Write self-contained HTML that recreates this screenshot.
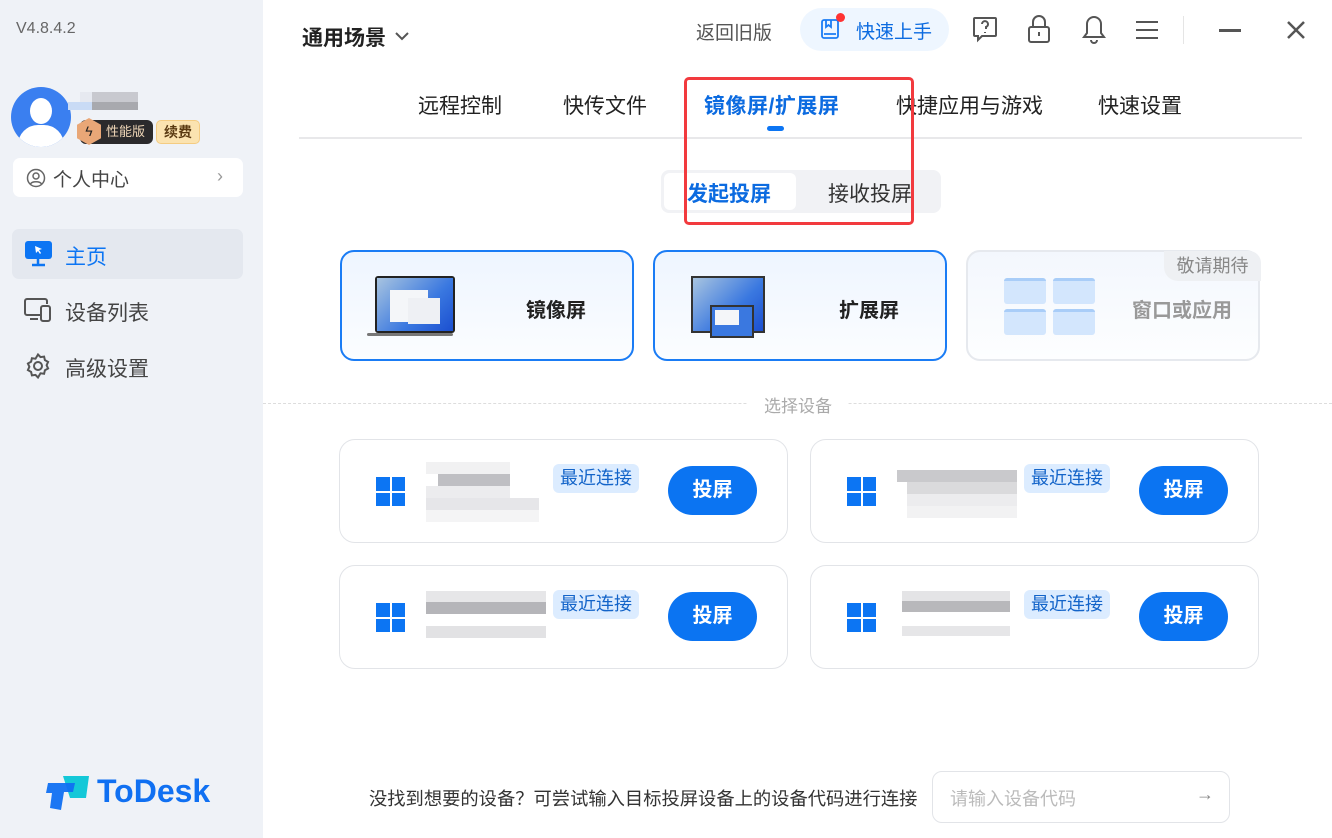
<!DOCTYPE html>
<html><head><meta charset="utf-8"><style>
*{margin:0;padding:0;box-sizing:border-box}
body{width:1332px;height:838px;overflow:hidden;background:#fff;font-family:"Liberation Sans","Noto Sans CJK SC",sans-serif;position:relative;color:#222}
.a{position:absolute}
#side{left:0;top:0;width:263px;height:838px;background:#eff2f7}
.t{white-space:nowrap}
.mode{border:2px solid #1a7cf5;border-radius:14px;background:linear-gradient(#eef5ff,#fbfdff);width:294px;height:111px;top:250px}
.mode b{position:absolute;top:42px;font-size:20px;color:#222}
.card{border:1.5px solid #e2e4e8;border-radius:16px;width:449px;height:104px;background:#fff}
.win{left:36px;top:37px;width:29px;height:29px}
.win i{position:absolute;width:13.5px;height:13.5px;background:#0c75f3}
.tag{left:213px;top:24px;width:86px;height:29px;background:#dcecff;border-radius:6px;color:#1364c9;font-size:18px;text-align:center;line-height:29px}
.btn{left:328px;top:26px;width:89px;height:49px;background:#0b74f2;border-radius:25px;color:#fff;font-size:20px;font-weight:bold;text-align:center;line-height:49px}
.px{position:absolute}
.tab{font-size:21px;top:90px}
</style></head><body>
<div id="side" class="a">
 <div class="a t" style="left:16px;top:20px;font-size:16px;color:#666">V4.8.4.2</div>
 <div class="a" style="left:11px;top:87px;width:60px;height:60px;border-radius:50%;background:#3a7ff0;overflow:hidden">
  <div class="a" style="left:19px;top:11px;width:22px;height:26px;border-radius:50%;background:#fff"></div>
  <div class="a" style="left:7px;top:38px;width:46px;height:30px;border-radius:20px 20px 0 0;background:#fff"></div>
 </div>
 <div class="a" style="left:80px;top:92px;width:12px;height:12px;background:#e6e9f0"></div>
 <div class="a" style="left:92px;top:92px;width:46px;height:10px;background:#c8c9cf"></div>
 <div class="a" style="left:68px;top:102px;width:24px;height:8px;background:#c9dbf5"></div>
 <div class="a" style="left:92px;top:102px;width:46px;height:8px;background:#a8a9ae"></div>
 <div class="a" style="left:80px;top:120px;width:73px;height:24px;background:#2b2a2c;border-radius:6px;color:#f0d7b8;font-size:13px;line-height:24px;padding-left:26px">性能版</div>
 <div class="a" style="left:77px;top:118px;width:24px;height:27px;background:#e9a777;clip-path:polygon(50% 0,100% 25%,100% 75%,50% 100%,0 75%,0 25%);color:#222;text-align:center;line-height:27px;font-size:14px">ϟ</div>
 <div class="a" style="left:156px;top:120px;width:44px;height:24px;background:#fbe3b0;border:1px solid #f4cc82;border-radius:5px;color:#5a3a12;font-size:14px;line-height:22px;text-align:center;font-weight:bold">续费</div>
 <div class="a" style="left:13px;top:158px;width:230px;height:39px;background:#fff;border-radius:7px">
  <svg class="a" style="left:13px;top:10px" width="20" height="20" viewBox="0 0 20 20" fill="none" stroke="#666" stroke-width="1.5"><circle cx="10" cy="10" r="8.5"/><circle cx="10" cy="8" r="3"/><path d="M4.5 16c1.5-3 9.5-3 11 0"/></svg>
  <div class="a t" style="left:40px;top:7px;font-size:19px;color:#444">个人中心</div>
  <div class="a" style="left:204px;top:8px;color:#999;font-size:18px">›</div>
 </div>
 <div class="a" style="left:12px;top:229px;width:231px;height:50px;background:#e4e8ef;border-radius:7px"></div>
 <svg class="a" style="left:25px;top:241px" width="27" height="26" viewBox="0 0 27 26"><rect x="0" y="0" width="27" height="18" rx="3" fill="#0c75f3"/><path d="M13 18v5M7 24h13" stroke="#0c75f3" stroke-width="2.5"/><path d="M10 5l7 3-3 1 2 3-1 1-2-3-2 2z" fill="#fff"/></svg>
 <div class="a t" style="left:65px;top:241px;font-size:21px;color:#0c75f3">主页</div>
 <svg class="a" style="left:24px;top:297px" width="28" height="26" viewBox="0 0 28 26" fill="none" stroke="#555" stroke-width="2"><path d="M16 18H3a2 2 0 0 1-2-2V4a2 2 0 0 1 2-2h18a2 2 0 0 1 2 2v3"/><path d="M6 22h8"/><rect x="17" y="9" width="9" height="15" rx="2"/></svg>
 <div class="a t" style="left:65px;top:297px;font-size:21px;color:#444">设备列表</div>
 <svg class="a" style="left:25px;top:353px" width="26" height="26" viewBox="0 0 26 26" fill="none" stroke="#555" stroke-width="2"><path d="M13 1.5l2.5 2.6 3.6-.5.8 3.5 3.2 1.8-1.5 3.3 1.5 3.3-3.2 1.8-.8 3.5-3.6-.5L13 24.5l-2.5-2.6-3.6.5-.8-3.5-3.2-1.8 1.5-3.3-1.5-3.3 3.2-1.8.8-3.5 3.6.5z"/><circle cx="13" cy="13" r="4"/></svg>
 <div class="a t" style="left:65px;top:353px;font-size:21px;color:#444">高级设置</div>
 <svg class="a" style="left:45px;top:774px" width="46" height="36" viewBox="0 0 46 36"><path d="M18 2h26l-3 22H25z" fill="#14c8d8"/><path d="M3 9h27l-2 9h-9l-3 18-11-2 2-15H1z" fill="#1070f2" opacity=".95"/></svg>
 <div class="a t" style="left:97px;top:773px;font-size:32px;font-weight:bold;color:#1070f2">ToDesk</div>
</div>

<div class="a t" style="left:302px;top:22px;font-size:21px;font-weight:bold;color:#222">通用场景</div>
<svg class="a" style="left:394px;top:31px" width="16" height="10" viewBox="0 0 16 10" fill="none" stroke="#555" stroke-width="2"><path d="M2 2l6 6 6-6"/></svg>
<div class="a t" style="left:696px;top:18px;font-size:19px;color:#555">返回旧版</div>
<div class="a" style="left:800px;top:8px;width:149px;height:43px;background:#eef6ff;border-radius:22px"></div>
<svg class="a" style="left:820px;top:17px" width="22" height="24" viewBox="0 0 22 24" fill="none" stroke="#1a7cf5" stroke-width="1.8"><rect x="2" y="3" width="16" height="18" rx="2"/><path d="M6 3v7l2.5-2 2.5 2V3M4 17h12"/></svg>
<div class="a" style="left:836px;top:13px;width:9px;height:9px;border-radius:50%;background:#f33"></div>
<div class="a t" style="left:856px;top:17px;font-size:19px;color:#0c6be0">快速上手</div>
<svg class="a" style="left:972px;top:16px" width="26" height="28" viewBox="0 0 26 28" fill="none" stroke="#555" stroke-width="2"><path d="M3 2h20a1 1 0 0 1 1 1v16a1 1 0 0 1-1 1H10l-4 4v-4H3a1 1 0 0 1-1-1V3a1 1 0 0 1 1-1z"/><path d="M10 8a3 3 0 1 1 4 3v2M13 16v1"/></svg>
<svg class="a" style="left:1027px;top:14px" width="24" height="30" viewBox="0 0 24 30" fill="none" stroke="#555" stroke-width="2"><path d="M6 13V8a6 6 0 0 1 12 0v5"/><rect x="2" y="13" width="20" height="15" rx="2"/><path d="M12 18v4"/></svg>
<svg class="a" style="left:1081px;top:14px" width="26" height="30" viewBox="0 0 26 30" fill="none" stroke="#555" stroke-width="2"><path d="M13 3a7 7 0 0 0-7 7v9l-3 4h20l-3-4v-9a7 7 0 0 0-7-7zM10 26a3 3 0 0 0 6 0"/></svg>
<svg class="a" style="left:1135px;top:20px" width="24" height="20" viewBox="0 0 24 20" stroke="#555" stroke-width="2"><path d="M1 2h22M1 10h22M1 18h22"/></svg>
<div class="a" style="left:1183px;top:16px;width:1px;height:28px;background:#e5e5e5"></div>
<div class="a" style="left:1219px;top:29px;width:22px;height:3px;background:#555"></div>
<svg class="a" style="left:1286px;top:20px" width="20" height="20" viewBox="0 0 20 20" stroke="#555" stroke-width="2.5"><path d="M2 2l16 16M18 2L2 18"/></svg>

<div class="a t tab" style="left:418px;color:#222">远程控制</div>
<div class="a t tab" style="left:563px;color:#222">快传文件</div>
<div class="a t tab" style="left:704px;font-weight:bold;color:#0c6be0;letter-spacing:0.5px">镜像屏/扩展屏</div>
<div class="a t tab" style="left:896px;color:#222">快捷应用与游戏</div>
<div class="a t tab" style="left:1098px;color:#222">快速设置</div>
<div class="a" style="left:767px;top:126px;width:17px;height:5px;border-radius:3px;background:#0c75f3"></div>
<div class="a" style="left:299px;top:137px;width:1003px;height:2px;background:#e8e8ea"></div>

<div class="a" style="left:661px;top:170px;width:280px;height:43px;background:#f1f2f5;border-radius:8px"></div>
<div class="a" style="left:664px;top:173px;width:132px;height:37px;background:#fff;border-radius:6px"></div>
<div class="a t" style="left:687px;top:178px;font-size:21px;font-weight:bold;color:#0c6be0">发起投屏</div>
<div class="a t" style="left:828px;top:178px;font-size:21px;color:#333">接收投屏</div>
<div class="a" style="left:684px;top:77px;width:230px;height:148px;border:3px solid #f23a3e;border-radius:5px"></div>

<div class="a mode" style="left:340px">
 <div class="a" style="left:33px;top:24px;width:80px;height:57px;background:#222;border-radius:3px"></div>
 <div class="a" style="left:35px;top:26px;width:76px;height:53px;background:linear-gradient(135deg,#a8c4e0,#3a78e0 60%,#1b4fd0)"></div>
 <div class="a" style="left:48px;top:38px;width:38px;height:32px;background:#f4f6f9"></div>
 <div class="a" style="left:66px;top:46px;width:32px;height:26px;background:#eef0f4"></div>
 <div class="a" style="left:25px;top:81px;width:86px;height:3px;background:#777;border-radius:2px"></div>
 <b style="left:184px">镜像屏</b>
</div>
<div class="a mode" style="left:653px">
 <div class="a" style="left:36px;top:24px;width:74px;height:57px;background:linear-gradient(135deg,#a8c4e0,#3a78e0 60%,#1b4fd0);border:2px solid #333"></div>
 <div class="a" style="left:55px;top:53px;width:44px;height:33px;background:#3a78e0;border:2px solid #333"></div>
 <div class="a" style="left:60px;top:58px;width:24px;height:15px;background:#f4f6f9"></div>
 <b style="left:184px">扩展屏</b>
</div>
<div class="a mode" style="left:966px;border:2px solid #e6e9ee;background:linear-gradient(#f3f7fd,#fdfeff)">
 <div class="a" style="left:196px;top:-1px;width:97px;height:30px;background:#eef0f3;border-radius:0 12px 0 14px;color:#888;font-size:18px;line-height:30px;text-align:center">敬请期待</div>
 <div class="a" style="left:36px;top:26px;width:42px;height:26px;background:#d3e6fd;border-top:3px solid #a9cdf8;border-radius:3px"></div>
 <div class="a" style="left:85px;top:26px;width:42px;height:26px;background:#d3e6fd;border-top:3px solid #a9cdf8;border-radius:3px"></div>
 <div class="a" style="left:36px;top:57px;width:42px;height:26px;background:#d3e6fd;border-top:3px solid #a9cdf8;border-radius:3px"></div>
 <div class="a" style="left:85px;top:57px;width:42px;height:26px;background:#d3e6fd;border-top:3px solid #a9cdf8;border-radius:3px"></div>
 <b style="left:164px;color:#999">窗口或应用</b>
</div>

<div class="a" style="left:263px;top:403px;width:1069px;border-top:1.5px dashed #ddd"></div>
<div class="a t" style="left:748px;top:392px;padding:0 16px;background:#fff;font-size:17px;color:#aaa">选择设备</div>

<div class="a card" style="left:339px;top:439px"><div class="a win"><i style="left:0;top:0"></i><i style="left:15.5px;top:0"></i><i style="left:0;top:15.5px"></i><i style="left:15.5px;top:15.5px"></i></div>
 <div class="px" style="left:86px;top:22px;width:84px;height:12px;background:#f1f1f2"></div><div class="px" style="left:98px;top:34px;width:72px;height:12px;background:#bfbfc3"></div><div class="px" style="left:86px;top:46px;width:84px;height:12px;background:#ececee"></div><div class="px" style="left:86px;top:58px;width:113px;height:12px;background:#e6e6e9"></div><div class="px" style="left:86px;top:70px;width:113px;height:12px;background:#f4f4f5"></div>
 <div class="a tag">最近连接</div><div class="a btn">投屏</div></div>
<div class="a card" style="left:810px;top:439px"><div class="a win"><i style="left:0;top:0"></i><i style="left:15.5px;top:0"></i><i style="left:0;top:15.5px"></i><i style="left:15.5px;top:15.5px"></i></div>
 <div class="px" style="left:86px;top:30px;width:120px;height:12px;background:#c9c9cc"></div><div class="px" style="left:96px;top:42px;width:110px;height:12px;background:#dadadc"></div><div class="px" style="left:96px;top:54px;width:110px;height:12px;background:#ececee"></div><div class="px" style="left:96px;top:66px;width:110px;height:12px;background:#f2f2f3"></div>
 <div class="a tag">最近连接</div><div class="a btn">投屏</div></div>
<div class="a card" style="left:339px;top:565px"><div class="a win"><i style="left:0;top:0"></i><i style="left:15.5px;top:0"></i><i style="left:0;top:15.5px"></i><i style="left:15.5px;top:15.5px"></i></div>
 <div class="px" style="left:86px;top:25px;width:120px;height:11px;background:#e6e6e8"></div><div class="px" style="left:86px;top:36px;width:120px;height:12px;background:#b5b5b9"></div><div class="px" style="left:86px;top:60px;width:120px;height:12px;background:#e2e2e4"></div>
 <div class="a tag">最近连接</div><div class="a btn">投屏</div></div>
<div class="a card" style="left:810px;top:565px"><div class="a win"><i style="left:0;top:0"></i><i style="left:15.5px;top:0"></i><i style="left:0;top:15.5px"></i><i style="left:15.5px;top:15.5px"></i></div>
 <div class="px" style="left:91px;top:25px;width:108px;height:10px;background:#e4e4e6"></div><div class="px" style="left:91px;top:35px;width:108px;height:11px;background:#b8b8bb"></div><div class="px" style="left:91px;top:60px;width:108px;height:10px;background:#e6e6e8"></div>
 <div class="a tag">最近连接</div><div class="a btn">投屏</div></div>

<div class="a t" style="left:369px;top:785px;font-size:18.3px;color:#333">没找到想要的设备？可尝试输入目标投屏设备上的设备代码进行连接</div>
<div class="a" style="left:932px;top:771px;width:298px;height:52px;border:1.5px solid #e2e4e8;border-radius:10px"></div>
<div class="a t" style="left:950px;top:785px;font-size:18px;color:#bbb">请输入设备代码</div>
<div class="a t" style="left:1196px;top:784px;font-size:18px;color:#888">→</div>
</body></html>
